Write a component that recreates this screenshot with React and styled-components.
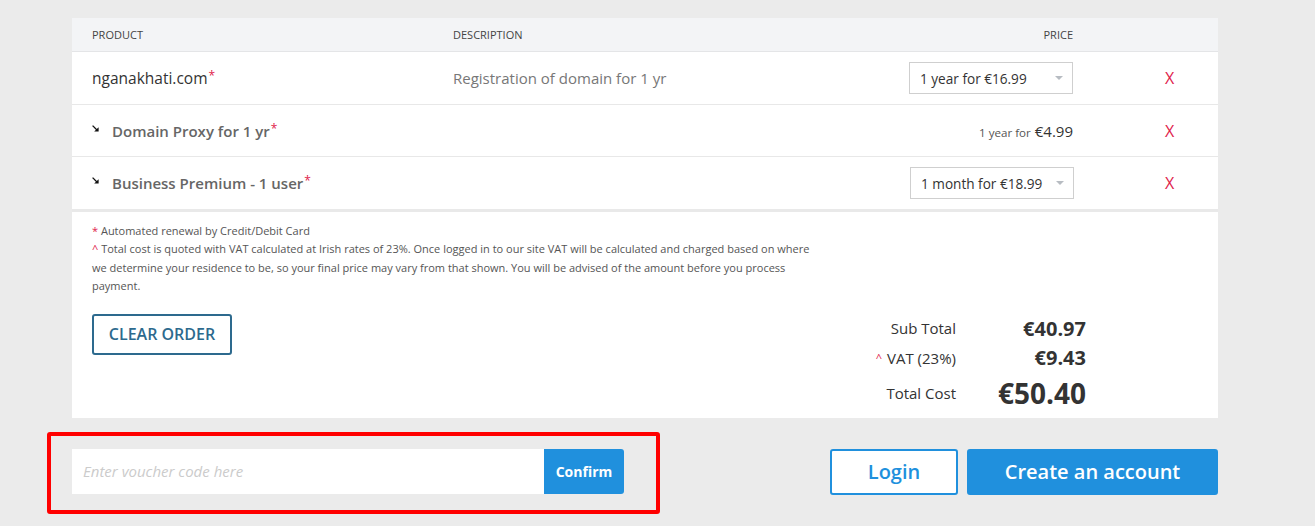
import React from "react";
import styled, { createGlobalStyle } from "styled-components";

const Global = createGlobalStyle`
  html, body { margin: 0; padding: 0; background: #ebebeb; }
  body { font-family: "Open Sans", "Liberation Sans", sans-serif; color: #333; }
  * { box-sizing: border-box; }
`;

const Page = styled.div`
  padding: 18px 0 0 47px;
  width: 1315px;
  height: 526px;
  overflow: hidden;
`;

const Card = styled.div`
  margin-left: 25px;
  width: 1146px;
  background: #fff;
`;

const COLS = "361px 456px 204px 1fr";

const HeaderRow = styled.div`
  display: grid;
  grid-template-columns: ${COLS};
  height: 34px;
  align-items: center;
  background: #f3f4f6;
  border-bottom: 1px solid #e4e5e7;
  font-size: 11px;
  text-transform: uppercase;
  color: #444;
`;

const HeadCell = styled.div`
  padding: 0 20px;
  text-align: ${(p) => (p.$right ? "right" : "left")};
`;

const Row = styled.div`
  display: grid;
  grid-template-columns: ${COLS};
  height: ${(p) => p.$h}px;
  align-items: center;
  border-bottom: ${(p) => (p.$last ? "3px solid #e9e9e9" : "1px solid #e8e8e8")};
`;

const ProductCell = styled.div`
  padding-left: 20px;
  display: flex;
  align-items: center;
  font-size: ${(p) => (p.$sub ? "15px" : "15.5px")};
  color: ${(p) => (p.$sub ? "#666" : "#333")};
  font-weight: ${(p) => (p.$sub ? 600 : 400)};
`;

const Arrow = styled.svg`
  width: 7px;
  height: 7px;
  margin: -5px 13px 0 0;
`;

const Star = styled.sup`
  color: #e0214b;
  font-size: 12px;
  font-weight: 400;
  line-height: 0;
  margin-left: 1px;
  position: relative;
  top: -2px;
`;

const DescCell = styled.div`
  padding-left: 20px;
  font-size: 15px;
  color: #777;
`;

const PriceCell = styled.div`
  padding: 0 20px;
  display: flex;
  justify-content: flex-end;
  align-items: baseline;
`;

const Select = styled.div`
  width: 164px;
  height: 32px;
  border: 1px solid #cfcfcf;
  display: flex;
  align-items: center;
  justify-content: space-between;
  padding: 0 9px 0 10px;
  font-size: 13.6px;
  color: #333;
  margin-left: ${(p) => p.$shift || 0}px;
  margin-right: ${(p) => -(p.$shift || 0)}px;
`;

const Caret = styled.span`
  width: 0;
  height: 0;
  border-left: 4.5px solid transparent;
  border-right: 4.5px solid transparent;
  border-top: 4px solid #b7bcc2;
`;

const SmallFor = styled.span`
  font-size: 11.6px;
  color: #555;
  margin-right: 4px;
`;

const FixedPrice = styled.span`
  font-size: 15px;
  color: #333;
`;

const RemoveCell = styled.div`
  padding-left: 72px;
  color: #e0214b;
  font-size: 16px;
`;

const Footer = styled.div`
  padding: 10px 0 5px 20px;
`;

const Notes = styled.div`
  width: 722px;
  font-size: 11px;
  line-height: 18.4px;
  color: #555;
`;

const Mark = styled.span`
  color: #e0214b;
`;

const FooterBottom = styled.div`
  display: flex;
  justify-content: space-between;
  align-items: flex-start;
  margin-top: 18px;
  padding-right: 132px;
`;

const ClearButton = styled.button`
  width: 140px;
  height: 41px;
  background: #fff;
  border: 2px solid #2d6a8e;
  border-radius: 3px;
  color: #2d6a8e;
  font-family: "Open Sans", sans-serif;
  font-size: 16px;
  font-weight: 600;
  padding: 0;
`;

const Totals = styled.div`
  display: grid;
  grid-template-columns: auto 130px;
  align-items: center;
`;

const TotLabel = styled.div`
  text-align: right;
  font-size: 15px;
  color: #333;
  line-height: ${(p) => p.$h}px;
`;

const TotValue = styled.div`
  text-align: right;
  font-weight: 700;
  color: #333;
  font-size: ${(p) => p.$size}px;
  line-height: ${(p) => p.$h}px;
`;

const Caretish = styled.span`
  color: #e0214b;
  font-size: 11px;
  margin-right: 5px;
  vertical-align: 2px;
`;

const BottomRow = styled.div`
  display: flex;
  align-items: flex-start;
  margin-top: 14px;
`;

const VoucherBox = styled.div`
  width: 613px;
  height: 82px;
  border: 4px solid #ff0000;
  border-radius: 3px;
  padding: 13px 0 0 21px;
  display: flex;
`;

const VoucherInput = styled.input`
  width: 472px;
  height: 45px;
  border: none;
  outline: none;
  background: #fff;
  padding: 0 11px;
  font-family: "Open Sans", sans-serif;
  font-size: 15px;
  font-style: italic;
  color: #333;
  &::placeholder { color: #cbcbcb; }
`;

const ConfirmButton = styled.button`
  width: 80px;
  height: 45px;
  border: none;
  border-radius: 0 3px 3px 0;
  background: #2090dd;
  color: #fff;
  font-family: "Open Sans", sans-serif;
  font-size: 14px;
  font-weight: 700;
  padding: 0;
`;

const Auth = styled.div`
  display: flex;
  gap: 9px;
  margin: 17px 0 0 170px;
`;

const AuthButton = styled.button`
  height: 46px;
  width: ${(p) => p.$w}px;
  border: 2px solid #2090dd;
  border-radius: 3px;
  background: ${(p) => (p.$primary ? "#2090dd" : "#fff")};
  color: ${(p) => (p.$primary ? "#fff" : "#2090dd")};
  font-family: "Open Sans", sans-serif;
  font-size: 20px;
  font-weight: 600;
  padding: 0;
`;

const SubArrow = () => (
  <Arrow viewBox="0 0 7 7">
    <path d="M0.6 0.6 L5.2 5.2" stroke="#111" strokeWidth="1.3" />
    <path d="M6.6 2.2 L6.6 6.6 L2.2 6.6 Z" fill="#111" />
  </Arrow>
);

export default function App() {
  return (
    <>
      <Global />
      <Page>
        <Card>
          <HeaderRow>
            <HeadCell>Product</HeadCell>
            <HeadCell>Description</HeadCell>
            <HeadCell $right>Price</HeadCell>
            <HeadCell />
          </HeaderRow>

          <Row $h={53}>
            <ProductCell>
              nganakhati.com<Star>*</Star>
            </ProductCell>
            <DescCell>Registration of domain for 1 yr</DescCell>
            <PriceCell>
              <Select>
                <span>1 year for €16.99</span>
                <Caret />
              </Select>
            </PriceCell>
            <RemoveCell>X</RemoveCell>
          </Row>

          <Row $h={52}>
            <ProductCell $sub>
              <SubArrow />
              Domain Proxy for 1 yr<Star>*</Star>
            </ProductCell>
            <DescCell />
            <PriceCell>
              <SmallFor>1 year for</SmallFor>
              <FixedPrice>€4.99</FixedPrice>
            </PriceCell>
            <RemoveCell>X</RemoveCell>
          </Row>

          <Row $h={55} $last>
            <ProductCell $sub>
              <SubArrow />
              Business Premium - 1 user<Star>*</Star>
            </ProductCell>
            <DescCell />
            <PriceCell>
              <Select $shift={1}>
                <span>1 month for €18.99</span>
                <Caret />
              </Select>
            </PriceCell>
            <RemoveCell>X</RemoveCell>
          </Row>

          <Footer>
            <Notes>
              <Mark>*</Mark> Automated renewal by Credit/Debit Card
              <br />
              <Mark>^</Mark> Total cost is quoted with VAT calculated at Irish rates of 23%. Once logged in to our site VAT will be calculated and charged based on where we determine your residence to be, so your final price may vary from that shown. You will be advised of the amount before you process payment.
            </Notes>
            <FooterBottom>
              <ClearButton>CLEAR ORDER</ClearButton>
              <Totals>
                <TotLabel $h={29}>Sub Total</TotLabel>
                <TotValue $size={20} $h={29}>€40.97</TotValue>
                <TotLabel $h={29}>
                  <Caretish>^</Caretish>VAT (23%)
                </TotLabel>
                <TotValue $size={20} $h={29}>€9.43</TotValue>
                <TotLabel $h={40}>Total Cost</TotLabel>
                <TotValue $size={28} $h={40}>€50.40</TotValue>
              </Totals>
            </FooterBottom>
          </Footer>
        </Card>

        <BottomRow>
          <VoucherBox>
            <VoucherInput placeholder="Enter voucher code here" />
            <ConfirmButton>Confirm</ConfirmButton>
          </VoucherBox>
          <Auth>
            <AuthButton $w={128}>Login</AuthButton>
            <AuthButton $w={251} $primary>Create an account</AuthButton>
          </Auth>
        </BottomRow>
      </Page>
    </>
  );
}
